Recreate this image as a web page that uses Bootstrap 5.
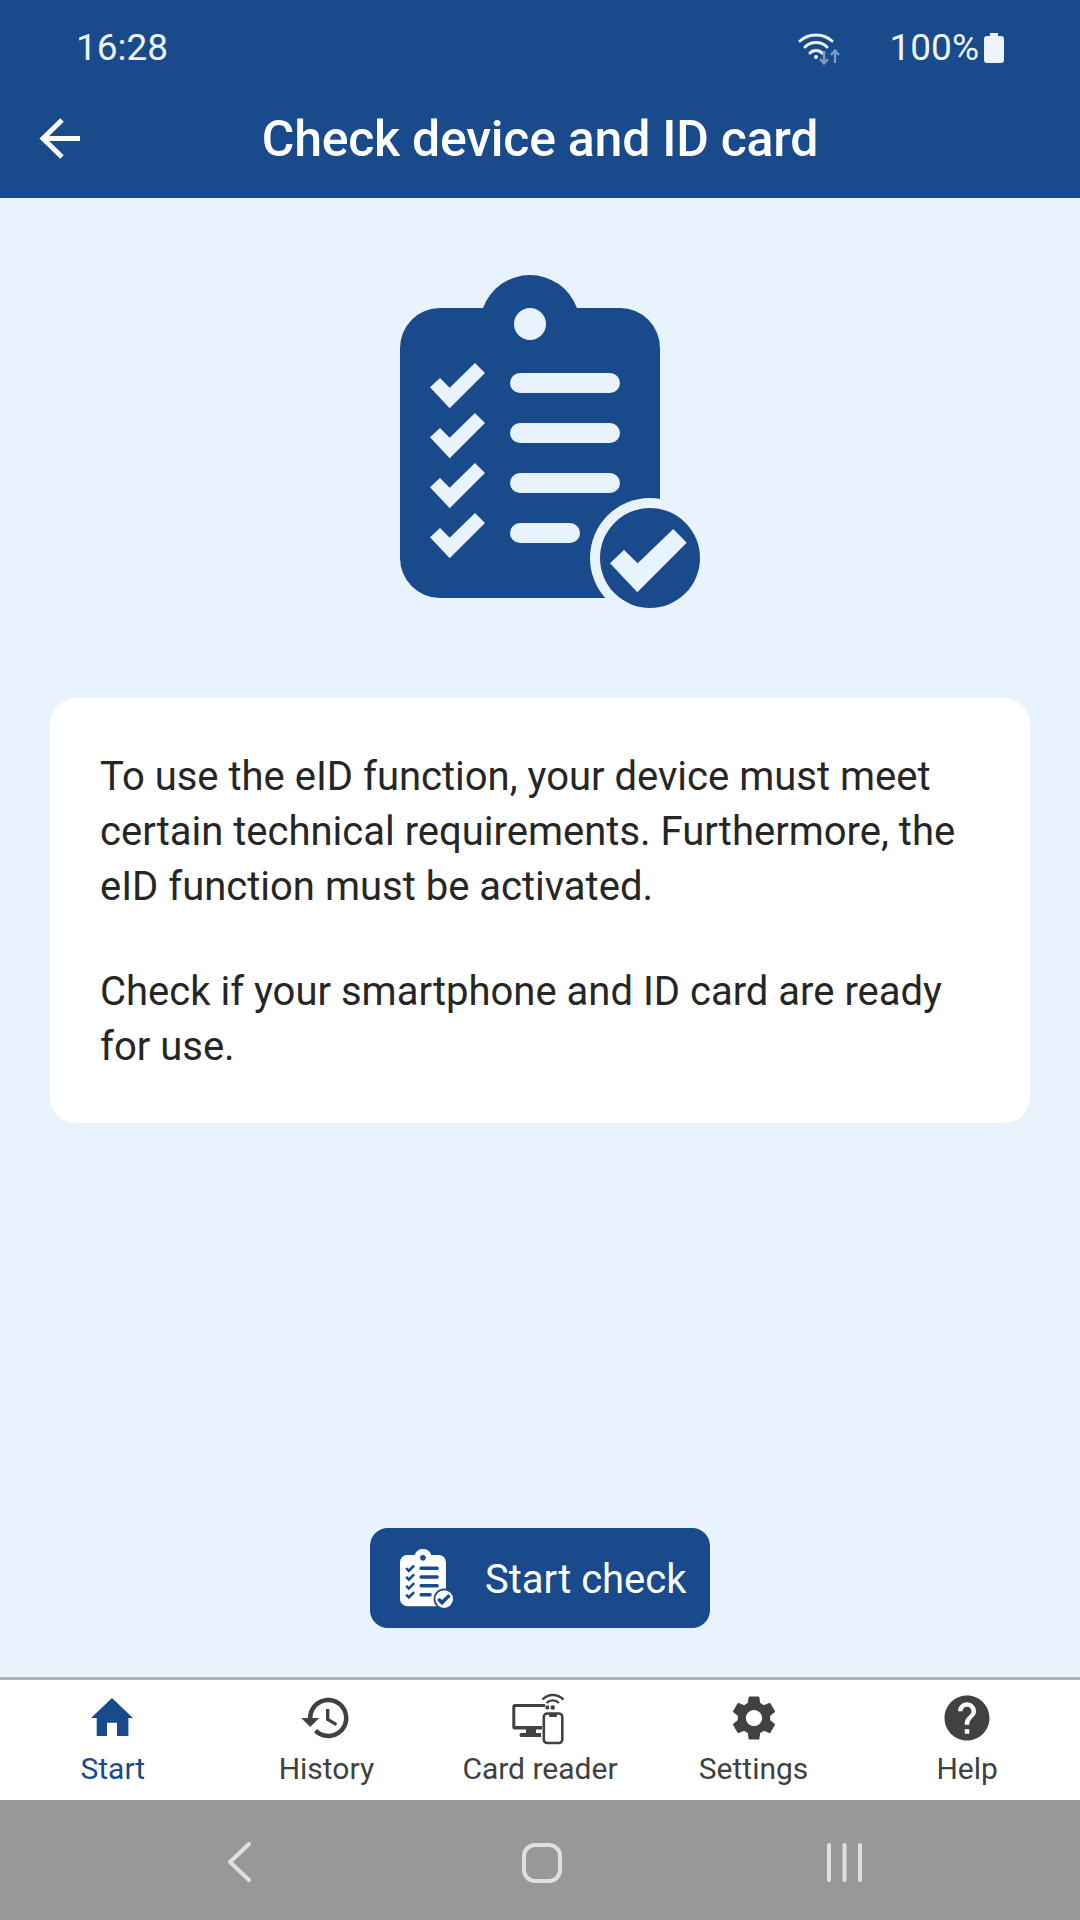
<!DOCTYPE html>
<html lang="en">
<head>
    <meta charset="UTF-8">
    <meta name="viewport" content="width=device-width, initial-scale=1.0">
    <title>Check device and ID card</title>
    <link href="https://cdn.jsdelivr.net/npm/bootstrap@5.3.3/dist/css/bootstrap.min.css" rel="stylesheet">
    <style>
        body { width: 1080px; height: 1920px; overflow: hidden; background: #e9f3fd; font-family: Roboto, "Liberation Sans", sans-serif; color: #262626; }
        .app-frame { height: 1920px; }
        .top-bar { background: #194a8b; color: #fff; height: 198px; }
        .status-row { height: 96px; padding: 0 75px 0 76px; font-size: 37px; font-weight: 400; color: #eef3fa; }
        .wifi-ico { margin-right: 40px; }
        .title-row { height: 86px; padding: 0 30px; }
        .page-title { font-size: 50px; font-weight: 500; letter-spacing: -.25px; margin: 0; line-height: 1; }
        .spacer-60 { width: 60px; }
        .content-area { padding-top: 62px; }
        .hero-ico { --body: #194a8b; --mark: #e9f3fd; width: 340px; height: 360px; margin-left: 380px; }
        .info-card { margin: 78px 50px 0; border: 0; border-radius: 26px; padding: 51px 50px 49px; font-size: 40px; line-height: 55px; color: #262626; }
        .info-card p { margin: 0; }
        .info-card p + p { margin-top: 50px; }
        .check-btn { --bs-btn-bg: #194a8b; --bs-btn-hover-bg: #194a8b; --bs-btn-color: #fff; --bs-btn-hover-color: #fff; --bs-btn-border-width: 0; width: 340px; height: 100px; margin-bottom: 49px; border-radius: 18px; font-size: 40px; padding: 0 0 0 30px; gap: 32px; }
        .check-label { padding-top: 4px; }
        .btn-ico { --body: #fff; --mark: #194a8b; width: 53px; height: 59px; }
        .tab-bar { height: 123px; border-top: 3px solid #b0b0b0; background: #fff; padding: 11px 6px 0; }
        .tab-item { width: 20%; color: #414141; font-size: 30px; line-height: 34px; text-decoration: none; }
        .tab-item svg { fill: currentColor; margin-bottom: 7px; }
        .tab-active { color: #194a8b; }
        .sys-bar { height: 120px; background: #989898; }
        .sys-ico { display: block; }
    </style>
</head>
<body>
    <!-- checklist icon, used big on the page and small in the button -->
    <svg width="0" height="0" class="position-absolute">
        <symbol id="checklist" viewBox="20 15 300 333">
            <path style="fill: var(--body)" d="M60 48H103A50 50 0 0 1 197 48H240A40 40 0 0 1 280 88V298A40 40 0 0 1 240 338H60A40 40 0 0 1 20 298V88A40 40 0 0 1 60 48Z"/>
            <g style="fill: var(--mark)">
                <circle cx="150" cy="64" r="16"/>
                <rect x="130" y="113" width="110" height="20" rx="10"/>
                <rect x="130" y="163" width="110" height="20" rx="10"/>
                <rect x="130" y="213" width="110" height="20" rx="10"/>
                <rect x="130" y="263" width="70" height="20" rx="10"/>
                <path d="M50 127.3L60 118L69.7 127.7L95 103L105 113L69.7 148.3Z"/>
                <path d="M50 177.3L60 168L69.7 177.7L95 153L105 163L69.7 198.3Z"/>
                <path d="M50 227.3L60 218L69.7 227.7L95 203L105 213L69.7 248.3Z"/>
                <path d="M50 277.3L60 268L69.7 277.7L95 253L105 263L69.7 298.3Z"/>
                <circle cx="270" cy="298" r="60"/>
            </g>
            <circle style="fill: var(--body)" cx="270" cy="298" r="50"/>
            <path style="fill: var(--mark)" d="M230 303.3L244 290L257.7 303.3L293.3 269L306.7 282.7L257.3 332.3Z"/>
        </symbol>
    </svg>

    <div class="app-frame d-flex flex-column">
        <header class="top-bar">
            <div class="status-row d-flex align-items-center">
                <span class="flex-grow-1">16:28</span>
                <svg class="wifi-ico" width="60" height="45" viewBox="0 0 60 45" fill="none">
                    <g stroke="#eef3fa" stroke-width="3" stroke-linecap="round">
                        <path d="M10 15C19 7 33 7 42 15"/>
                        <path d="M15 21C21 15 31 15 37 21"/>
                        <path d="M20 27C23 23.5 29 23.5 32 27"/>
                    </g>
                    <circle cx="26" cy="31" r="2" fill="#eef3fa"/>
                    <g stroke="#7f9bc2" stroke-width="2.4" fill="none">
                        <path d="M34 25V37M30 33L34 37.5L38 33"/>
                        <path d="M45 37V25M41 29L45 24.5L49 29"/>
                    </g>
                </svg>
                <span>100%</span>
                <svg class="ms-1" width="22" height="30" viewBox="0 0 22 30">
                    <path fill="#eef3fa" d="M7 0H15V3H18Q21 3 21 6V27Q21 30 18 30H4Q1 30 1 27V6Q1 3 4 3H7Z"/>
                </svg>
            </div>
            <div class="title-row d-flex align-items-center">
                <svg width="60" height="60" viewBox="0 0 60 60" fill="none" stroke="#fff" stroke-width="5">
                    <path d="M50 29.500H13"/>
                    <path d="M32 11L13 29.500L32 48"/>
                </svg>
                <h1 class="page-title flex-grow-1 text-center">Check device and ID card</h1>
                <div class="spacer-60"></div>
            </div>
        </header>

        <main class="content-area flex-grow-1 d-flex flex-column">
            <svg class="hero-ico" viewBox="0 0 340 360">
                <use href="#checklist" x="20" y="15" width="300" height="333"/>
            </svg>
            <div class="card info-card">
                <p>To use the eID function, your device must meet certain technical requirements. Furthermore, the eID function must be activated.</p>
                <p>Check if your smartphone and ID card are ready for use.</p>
            </div>
            <button type="button" class="btn check-btn align-self-center mt-auto d-flex align-items-center">
                <svg class="btn-ico"><use href="#checklist"/></svg>
                <span class="check-label">Start check</span>
            </button>
        </main>

        <nav class="tab-bar d-flex">
            <a class="tab-item tab-active d-flex flex-column align-items-center" href="#">
                <svg width="54" height="54" viewBox="1 0 54 54"><path d="M27 7L48 27H43.4V45H32V31.7H22V45H11.700V27H6Z"/></svg>
                <span>Start</span>
            </a>
            <a class="tab-item d-flex flex-column align-items-center" href="#">
                <svg width="54" height="54" viewBox="0 0 24 24"><path d="M13 3c-4.97 0-9 4.03-9 9H1l3.89 3.89.07.14L9 12H6c0-3.87 3.13-7 7-7s7 3.13 7 7-3.13 7-7 7c-1.93 0-3.68-.79-4.94-2.06l-1.42 1.42C8.27 19.99 10.51 21 13 21c4.97 0 9-4.03 9-9s-4.03-9-9-9zm-1 5v5l4.28 2.54.72-1.21-3.5-2.08V8H12z"/></svg>
                <span>History</span>
            </a>
            <a class="tab-item d-flex flex-column align-items-center" href="#">
                <svg width="80" height="54" viewBox="0 6 80 54">
                    <path d="M15 19H45V22H15.300V41H42V44.500H36V48H41V52H21Q19.500 52 19.500 50Q19.500 48 21 48H26V44.500H15Q12.300 44.500 12.300 42V22Q12.300 19 15 19Z"/>
                    <rect x="43.800" y="28.500" width="18.500" height="29.500" rx="3.500" fill="none" stroke="currentColor" stroke-width="2.600"/>
                    <path d="M49 28.500H57V31Q57 32 56 32H50Q49 32 49 31Z"/>
                    <circle cx="52.700" cy="22.500" r="2.300"/>
                    <rect x="45.500" y="20.500" width="3.500" height="3.800"/>
                    <g fill="none" stroke="currentColor" stroke-width="2.400">
                        <path d="M46.500 18C50 14.500 55.500 14.500 59 18"/>
                        <path d="M42.500 14.500C48.500 8.500 57 8.500 63.500 14.500"/>
                    </g>
                </svg>
                <span>Card reader</span>
            </a>
            <a class="tab-item d-flex flex-column align-items-center" href="#">
                <svg width="54" height="54" viewBox="0 0 24 24"><path d="M19.14 12.94c.04-.3.06-.61.06-.94 0-.32-.02-.64-.07-.94l2.03-1.58c.18-.14.23-.41.12-.61l-1.92-3.32c-.12-.22-.37-.29-.59-.22l-2.39.96c-.5-.38-1.03-.7-1.62-.94l-.36-2.54c-.04-.24-.24-.41-.48-.41h-3.84c-.24 0-.43.17-.47.41l-.36 2.54c-.59.24-1.13.57-1.62.94l-2.39-.96c-.22-.08-.47 0-.59.22L2.74 8.87c-.12.21-.08.47.12.61l2.03 1.58c-.05.3-.09.63-.09.94s.02.64.07.94l-2.03 1.58c-.18.14-.23.41-.12.61l1.92 3.32c.12.22.37.29.59.22l2.39-.96c.5.38 1.03.7 1.62.94l.36 2.54c.05.24.24.41.48.41h3.84c.24 0 .44-.17.47-.41l.36-2.54c.59-.24 1.13-.56 1.62-.94l2.39.96c.22.08.47 0 .59-.22l1.92-3.32c.12-.22.07-.47-.12-.61l-2.01-1.58zM12 15.6c-1.98 0-3.6-1.62-3.6-3.6s1.62-3.6 3.6-3.6 3.6 1.62 3.6 3.6-1.62 3.6-3.6 3.6z"/></svg>
                <span>Settings</span>
            </a>
            <a class="tab-item d-flex flex-column align-items-center" href="#">
                <svg width="54" height="54" viewBox="0 0 24 24"><path d="M12 2C6.48 2 2 6.48 2 12s4.48 10 10 10 10-4.48 10-10S17.52 2 12 2zm1 17h-2v-2h2v2zm2.07-7.75l-.9.92C13.45 12.9 13 13.5 13 15h-2v-.5c0-1.1.45-2.1 1.17-2.83l1.24-1.26c.37-.36.59-.86.59-1.41 0-1.1-.9-2-2-2s-2 .9-2 2H8c0-2.21 1.79-4 4-4s4 1.79 4 4c0 .88-.36 1.68-.93 2.25z"/></svg>
                <span>Help</span>
            </a>
        </nav>

        <div class="sys-bar">
            <svg class="sys-ico" width="1080" height="120" viewBox="0 1800 1080 120" fill="none" stroke="#e0e0e0" stroke-width="4" stroke-linecap="round">
                <path d="M249 1844L230 1862L249 1880" stroke-linejoin="round"/>
                <rect x="524" y="1845" width="36" height="36" rx="11"/>
                <path d="M829 1845V1880M844.500 1845V1880M860 1845V1880"/>
            </svg>
        </div>
    </div>

    <script src="https://cdn.jsdelivr.net/npm/bootstrap@5.3.3/dist/js/bootstrap.bundle.min.js"></script>
</body>
</html>
